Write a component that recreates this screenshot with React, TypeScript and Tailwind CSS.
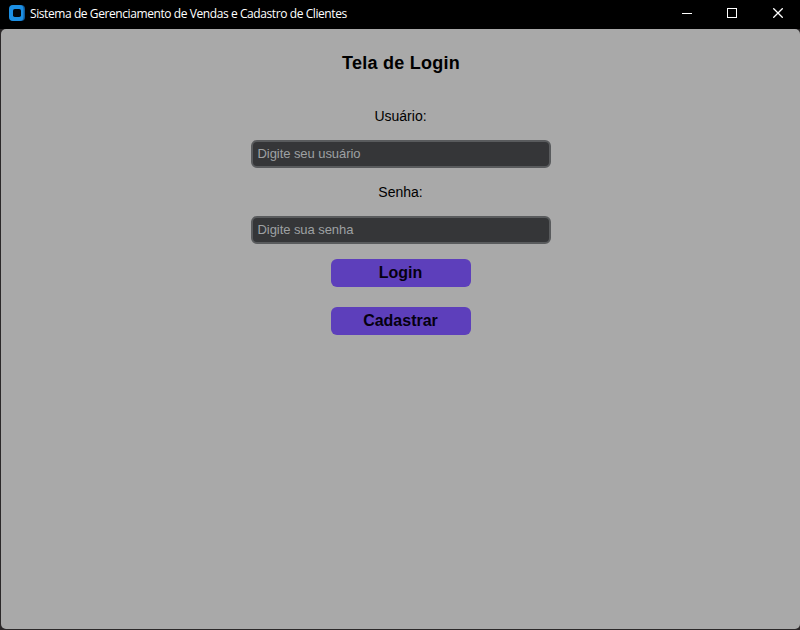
import React from 'react';

function LogoIcon() {
  return (
    <svg width="16" height="16" viewBox="0 0 16 16" className="mb-px shrink-0">
      <rect x="1" y="0" width="15" height="16" rx="4" fill="#0e5798" />
      <rect x="0" y="0" width="14.5" height="16" rx="4" fill="#1c8fe3" />
      <rect x="4" y="4" width="8" height="8" rx="1.8" fill="#020509" />
    </svg>
  );
}

function TitleBar() {
  return (
    <header className="flex h-[29px] shrink-0 items-start bg-black text-white">
      <div className="flex h-[27px] flex-1 items-center gap-[5px] pl-[9px]">
        <LogoIcon />
        <span className="whitespace-nowrap font-['Open_Sans',sans-serif] text-[12px] leading-[16px] tracking-[-0.415px]">
          Sistema de Gerenciamento de Vendas e Cadastro de Clientes
        </span>
      </div>
      <div className="flex h-[26px] items-center">
        <button aria-label="Minimizar" className="flex w-[42px] justify-center">
          <svg width="10" height="10" shapeRendering="crispEdges"><path d="M0 5.5H10" stroke="#fff" /></svg>
        </button>
        <button aria-label="Maximizar" className="flex w-[48px] justify-center">
          <svg width="10" height="10" shapeRendering="crispEdges"><rect x=".5" y=".5" width="9" height="9" fill="none" stroke="#fff" /></svg>
        </button>
        <button aria-label="Fechar" className="flex w-[44px] justify-center">
          <svg width="10" height="10"><path d="M.3.3 9.7 9.7M9.7.3.3 9.7" stroke="#fff" strokeWidth="1.3" /></svg>
        </button>
      </div>
    </header>
  );
}

function Field({ placeholder, type }: { placeholder: string; type: string }) {
  return (
    <input
      type={type}
      placeholder={placeholder}
      className="block h-7 w-[300px] rounded-[6px] border-2 border-[#595b5d] bg-[#353638] px-[5px] pb-[2px] text-[13px] tracking-[-0.06px] text-white placeholder:text-[#9ea1a3]"
    />
  );
}

function ActionButton({ label }: { label: string }) {
  return (
    <button className="h-7 w-[140px] rounded-[6px] bg-[#5d3fbb] text-[16px] font-bold leading-[26px] text-[#050010]">
      {label}
    </button>
  );
}

export default function App() {
  return (
    <div className="flex h-[630px] w-[800px] flex-col overflow-hidden bg-black font-['Liberation_Sans',Arial,sans-serif]">
      <TitleBar />
      <div className="flex-1 bg-[#2b2829] pb-px pl-px">
        <main className="flex h-full flex-col items-center rounded-[5px] bg-[#a9a9a9] text-black">
          <h1 className="mt-[23px] h-[22px] pl-px text-[18px] font-bold leading-[22px] tracking-[0.24px]">Tela de Login</h1>
          <label className="mt-[32px] h-5 text-[14px] leading-5">Usuário:</label>
          <div className="mt-[14px]"><Field type="text" placeholder="Digite seu usuário" /></div>
          <label className="mt-[14px] h-5 text-[14px] leading-5">Senha:</label>
          <div className="mt-[14px]"><Field type="password" placeholder="Digite sua senha" /></div>
          <div className="mt-[15px] flex flex-col gap-5">
            <ActionButton label="Login" />
            <ActionButton label="Cadastrar" />
          </div>
        </main>
      </div>
    </div>
  );
}
